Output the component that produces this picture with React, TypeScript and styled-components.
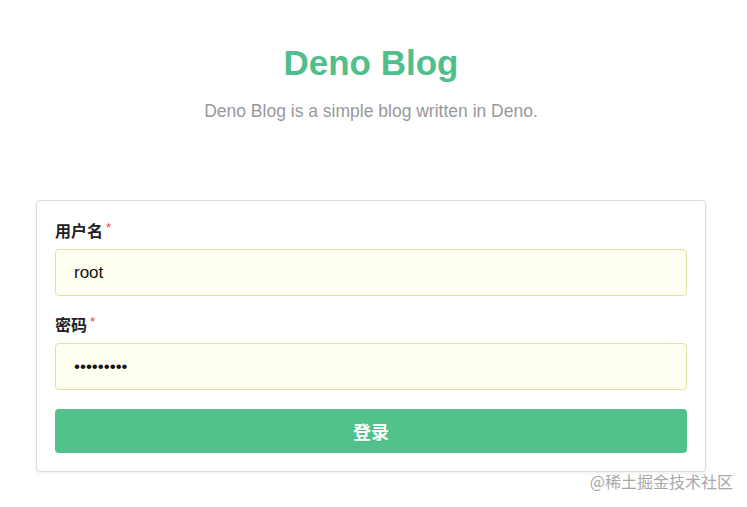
import styled, { createGlobalStyle } from "styled-components";

const GlobalStyle = createGlobalStyle`
  html, body {
    margin: 0;
    padding: 0;
    background: #fff;
    font-family: "Liberation Sans", Arial, "Noto Sans CJK SC", sans-serif;
  }
`;

const App = () => {
  return (
    <Page>
      <GlobalStyle />
      <Header>
        <Title>Deno Blog</Title>
        <Subtitle>Deno Blog is a simple blog written in Deno.</Subtitle>
      </Header>
      <Card>
        <Field>
          <Label>
            用户名<Required>*</Required>
          </Label>
          <Input type="text" defaultValue="root" />
        </Field>
        <Field>
          <Label>
            密码<Required>*</Required>
          </Label>
          <Input type="password" defaultValue="123456789" />
        </Field>
        <SubmitButton>登录</SubmitButton>
      </Card>
      <Watermark>@稀土掘金技术社区</Watermark>
    </Page>
  );
};

const Page = styled.div`
  position: relative;
  width: 747px;
  height: 507px;
  box-sizing: border-box;
  padding: 42px 41px 0 36px;
  overflow: hidden;
`;

const Header = styled.div`
  display: flex;
  flex-direction: column;
  align-items: center;
`;

const Title = styled.h1`
  margin: 0;
  font-size: 35px;
  font-weight: 700;
  line-height: 42px;
  color: #50bf8b;
`;

const Subtitle = styled.p`
  margin: 17px 0 0 0;
  font-size: 17.5px;
  line-height: 20px;
  color: #999;
`;

const Card = styled.div`
  margin-top: 79px;
  display: flex;
  flex-direction: column;
  gap: 19px;
  padding: 20px 18px 18px 18px;
  border: 1px solid #dcdcdc;
  border-radius: 4px;
  box-shadow: 0 1px 3px rgba(0, 0, 0, 0.08);
  background: #fff;
`;

const Field = styled.div`
  display: flex;
  flex-direction: column;
  gap: 6px;
`;

const Label = styled.label`
  font-size: 16px;
  font-weight: 700;
  line-height: 22px;
  color: #222;
  font-family: "Liberation Sans", "Noto Sans CJK SC", sans-serif;
`;

const Required = styled.span`
  color: #e0474c;
  font-size: 13px;
  font-weight: 400;
  vertical-align: top;
  margin-left: 3px;
  position: relative;
  top: -4px;
`;

const Input = styled.input`
  box-sizing: border-box;
  height: 47px;
  width: 100%;
  padding: 0 18px;
  border: 1px solid #e0e0a6;
  border-radius: 4px;
  background: #fefff0;
  font-size: 17px;
  color: #111;
  font-family: "Liberation Sans", Arial, sans-serif;
  outline: none;
`;

const SubmitButton = styled.button`
  height: 44px;
  border: none;
  border-radius: 4px;
  background: #50c18b;
  color: #fff;
  font-size: 18px;
  font-weight: 700;
  font-family: "Liberation Sans", "Noto Sans CJK SC", sans-serif;
  cursor: pointer;
`;

const Watermark = styled.div`
  position: absolute;
  right: 14px;
  bottom: 14px;
  font-size: 16px;
  color: #a8a8a8;
  font-family: "Noto Sans CJK SC", sans-serif;
`;

export default App;
